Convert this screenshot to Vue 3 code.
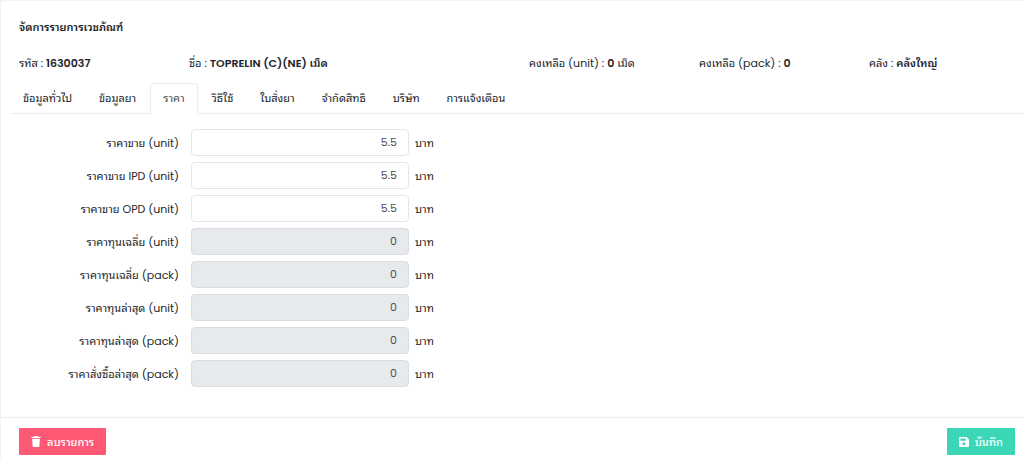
<template>
  <div class="card">
    <h1 class="title">จัดการรายการเวชภัณฑ์</h1>

    <div class="info">
      <div>รหัส : <b>{{ item.code }}</b></div>
      <div>ชื่อ : <b>{{ item.name }}</b></div>
      <div>คงเหลือ (unit) : <b>{{ item.unitLeft }}</b> เม็ด</div>
      <div>คงเหลือ (pack) : <b>{{ item.packLeft }}</b></div>
      <div>คลัง : <b>{{ item.store }}</b></div>
    </div>

    <nav class="tabs">
      <a
        v-for="tab in tabs"
        :key="tab"
        href="#"
        class="tab"
        :class="{ active: tab === activeTab }"
        @click.prevent="activeTab = tab"
      >{{ tab }}</a>
    </nav>

    <form id="price-form" class="prices" @submit.prevent>
      <div v-for="price in prices" :key="price.id" class="price-row">
        <label :for="price.id">{{ price.label }}</label>
        <input :id="price.id" v-model="price.value" type="text" :disabled="price.disabled" />
        <span>บาท</span>
      </div>
    </form>

    <div class="footer">
      <button type="button" class="btn btn-delete">
        <svg width="10" height="11" viewBox="0 0 10 12" fill="currentColor">
          <path d="M3.4 0h3.2l.7.8H10v1.4H0V.8h2.7z" />
          <path d="M.8 3h8.4l-.5 8.2a.9.9 0 0 1-.9.8H2.2a.9.9 0 0 1-.9-.8z" />
        </svg>
        ลบรายการ
      </button>
      <button type="submit" form="price-form" class="btn btn-save">
        <svg width="10" height="10" viewBox="0 0 10 10" fill="currentColor">
          <path fill-rule="evenodd" d="M1 0h6.6L10 2.4V9a1 1 0 0 1-1 1H1a1 1 0 0 1-1-1V1a1 1 0 0 1 1-1zM1.400 1.400v2.300h5.400V1.400zM5 5.300a1.500 1.500 0 1 0 0 3 1.500 1.500 0 0 0 0-3z" />
        </svg>
        บันทึก
      </button>
    </div>
  </div>
</template>

<script setup>
import { reactive, ref } from "vue"

const item = reactive({
  code: "1630037",
  name: "TOPRELIN (C)(NE) เม็ด",
  unitLeft: 0,
  packLeft: 0,
  store: "คลังใหญ่"
})

const tabs = [
  "ข้อมูลทั่วไป",
  "ข้อมูลยา",
  "ราคา",
  "วิธีใช้",
  "ใบสั่งยา",
  "จำกัดสิทธิ",
  "บริษัท",
  "การแจ้งเตือน"
]
const activeTab = ref("ราคา")

const prices = reactive([
  { id: "sale-unit", label: "ราคาขาย (unit)", value: "5.5", disabled: false },
  { id: "sale-ipd", label: "ราคาขาย IPD (unit)", value: "5.5", disabled: false },
  { id: "sale-opd", label: "ราคาขาย OPD (unit)", value: "5.5", disabled: false },
  { id: "avg-unit", label: "ราคาทุนเฉลี่ย (unit)", value: "0", disabled: true },
  { id: "avg-pack", label: "ราคาทุนเฉลี่ย (pack)", value: "0", disabled: true },
  { id: "last-unit", label: "ราคาทุนล่าสุด (unit)", value: "0", disabled: true },
  { id: "last-pack", label: "ราคาทุนล่าสุด (pack)", value: "0", disabled: true },
  { id: "order-pack", label: "ราคาสั่งซื้อล่าสุด (pack)", value: "0", disabled: true }
])
</script>

<style>
body {
  background: #f2f3f8;
}
</style>

<style scoped>
.card {
  margin: 1px 0 0 1px;
  background: white;
  border-radius: 4px 0 0 0;
  color: #212529;
  font-family: Poppins, Lato, "Noto Sans Thai Looped", Loma, Waree, Garuda, "Noto Sans Thai", sans-serif;
  font-size: 11px;
  line-height: 16px;
}

.title {
  margin: 0;
  padding: 18px 18px 20px;
  font-size: 11px;
  font-weight: 600;
}

.info {
  display: grid;
  grid-template-columns: 17fr 34fr 17fr 17fr 15fr;
  padding: 0 5px 0 18px;
  white-space: nowrap;
}

b {
  font-weight: 600;
}

.tabs {
  display: flex;
  gap: 1px;
  margin-top: 12px;
  padding-left: 9px;
  position: relative;
}

.tabs::after {
  content: "";
  position: absolute;
  left: 9px;
  right: 0;
  bottom: 0;
  height: 1px;
  background: #ebedf2;
}

.tab {
  padding: 6px 12px 7px;
  border: 1px solid transparent;
  border-radius: 4px 4px 0 0;
  color: #212529;
  text-decoration: none;
  white-space: nowrap;
}

.tab.active {
  position: relative;
  z-index: 1;
  border-color: #ebedf2;
  border-bottom-color: white;
  background: white;
  color: #495057;
}

.prices {
  display: flex;
  flex-direction: column;
  gap: 6px;
  padding: 15px 0 30px;
}

.price-row {
  display: grid;
  grid-template-columns: 178fr 218fr 603fr;
  column-gap: 12px;
  align-items: center;
}

.price-row label {
  text-align: right;
  white-space: nowrap;
}

.price-row span {
  margin-left: -6px;
}

input {
  box-sizing: border-box;
  width: 100%;
  min-width: 0;
  height: 27px;
  padding: 0 11px;
  border: 1px solid #e2e5ec;
  border-radius: 4px;
  background: white;
  color: #495057;
  font: inherit;
  text-align: right;
}

input:disabled {
  border-color: #d9dde1;
  background: #e7eaed;
}

.footer {
  display: flex;
  justify-content: space-between;
  padding: 10px 9px 10px 18px;
  border-top: 1px solid #ebedf2;
}

.btn {
  display: flex;
  align-items: center;
  gap: 6px;
  height: 27px;
  padding: 0 12px;
  border: none;
  border-radius: 1px;
  color: white;
  font: inherit;
  font-weight: 500;
  white-space: nowrap;
}

.btn-delete {
  background: #fd5874;
}

.btn-save {
  background: #3bd6b5;
}
</style>
